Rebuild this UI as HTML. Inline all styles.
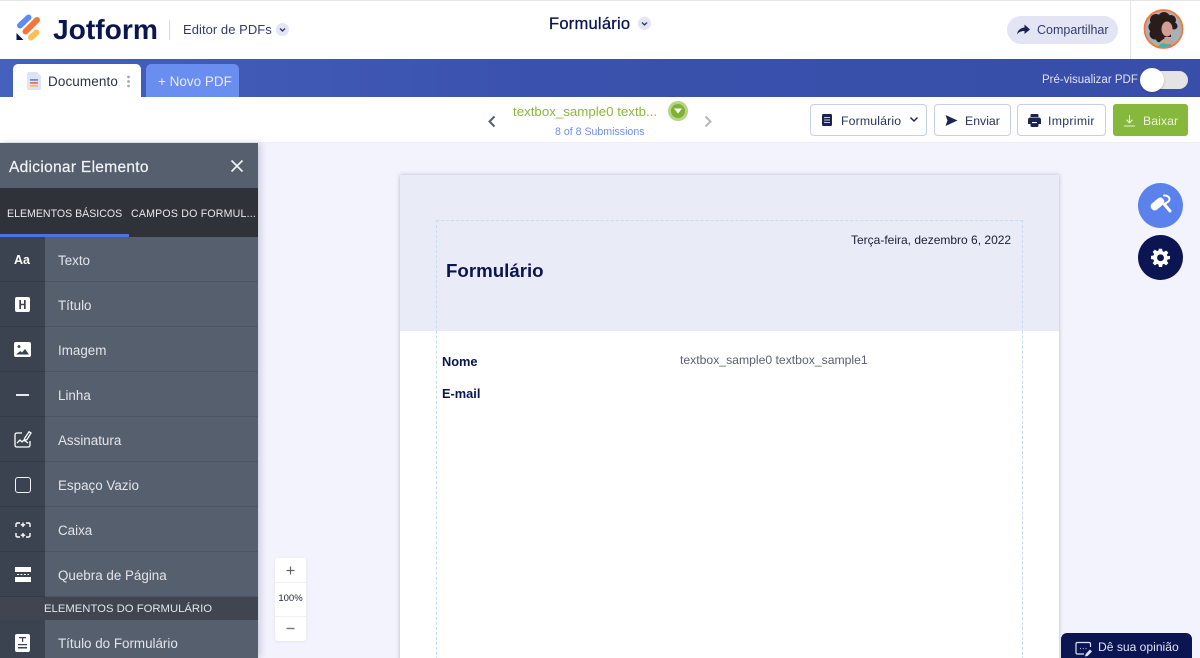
<!DOCTYPE html>
<html lang="pt"><head><meta charset="utf-8"><title>Jotform Editor de PDFs</title>
<style>
*{box-sizing:border-box}
html,body{margin:0;padding:0;width:1200px;height:658px;overflow:hidden}
#w{position:relative;width:1200px;height:658px;overflow:hidden;background:#f3f3fe;font-family:"Liberation Sans",sans-serif;color:#0a1551}
.a,.t{position:absolute}
.t{white-space:nowrap;line-height:20px;height:20px}
svg{position:absolute;display:block}
.btn{position:absolute;top:104px;height:32px;background:#fff;border:1px solid #c8ceed;border-radius:4px}
.row{position:absolute;left:0;width:258px;height:45px;background:#555f6e;border-bottom:1px solid #4c5563}
.row i{position:absolute;left:0;top:0;width:45px;height:45px;background:#3a434f;border-bottom:1px solid #333b46}
.row span{position:absolute;left:58px;top:13.500px;font-size:13.400px;line-height:20px;color:#e3e5ea;white-space:nowrap}
.chev{position:absolute;border-radius:50%;background:#e3e5f5}
</style></head><body><div id="w">

<!-- top header -->
<div class="a" style="left:0;top:0;width:1200px;height:59px;background:#fff;border-top:1px solid #e6e6e6"></div>
<svg style="left:0;top:0" width="45" height="45" viewBox="0 0 45 45">
<path d="M20 25.500 28.500 17.500" stroke="#5b8def" stroke-width="6" stroke-linecap="round"/>
<path d="M25.500 31.500 37 20" stroke="#f2763a" stroke-width="6" stroke-linecap="round"/>
<path d="M31 37.500 36.500 32.500" stroke="#fbc04d" stroke-width="6" stroke-linecap="round"/>
<path d="M16.500 33V40H23.500Z" fill="#0a1551"/>
</svg>
<div class="t" style="left:53px;top:13px;height:32px;line-height:32px;font-size:28.200px;font-weight:700;color:#0a1551">Jotform</div>
<div class="a" style="left:169px;top:20px;width:1px;height:20px;background:#d8dae5"></div>
<div class="t" style="left:183px;top:20px;font-size:13px;letter-spacing:.05px;color:#343c6a">Editor de PDFs</div>
<div class="chev" style="left:276px;top:23px;width:13px;height:13px"></div>
<svg style="left:276px;top:23px" width="13" height="13" viewBox="0 0 13 13"><path d="M4 5.500 6.500 8 9 5.500" fill="none" stroke="#2b3361" stroke-width="1.300"/></svg>
<div class="t" style="left:549px;top:13.500px;font-size:16.500px;letter-spacing:.25px;color:#0a1551;-webkit-text-stroke:.3px #0a1551">Formulário</div>
<div class="chev" style="left:638px;top:17px;width:13px;height:13px"></div>
<svg style="left:638px;top:17px" width="13" height="13" viewBox="0 0 13 13"><path d="M4 5.500 6.500 8 9 5.500" fill="none" stroke="#2b3361" stroke-width="1.300"/></svg>
<div class="a" style="left:1007px;top:16px;width:111px;height:28px;border-radius:14px;background:#e3e5f5"></div>
<svg style="left:1016px;top:23px" width="15" height="14" viewBox="0 0 15 14"><path d="M8.500 1.500 14 6.500 8.500 11V8C5 8 2.800 9 1 11.500 1.500 7.500 4 5 8.500 4.500Z" fill="#1a2352"/></svg>
<div class="t" style="left:1037px;top:20px;font-size:12.500px;color:#343c6a">Compartilhar</div>
<div class="a" style="left:1130px;top:0;width:1px;height:59px;background:#e5e6ec"></div>
<svg style="left:1143px;top:9px" width="41" height="40" viewBox="0 0 41 40">
<clipPath id="c"><circle cx="20.500" cy="20" r="18.500"/></clipPath>
<g clip-path="url(#c)">
<rect x="0" y="0" width="41" height="40" fill="#a9b1b8"/>
<g fill="#2a1c1b"><circle cx="13" cy="11" r="6"/><circle cx="21" cy="9" r="6"/><circle cx="28" cy="11" r="5"/><circle cx="11" cy="18" r="5.500"/><circle cx="12" cy="25" r="5.500"/><circle cx="17" cy="29" r="4.500"/><circle cx="31" cy="17" r="3.500"/><rect x="12" y="10" width="16" height="18"/></g>
<ellipse cx="24" cy="20" rx="5.500" ry="7.500" fill="#d49f92"/>
<path d="M14 40C15 33 19 30 24 29 29 30 33 34 34 40Z" fill="#c9a096"/>
<path d="M14 40C16 35 20 33 23 35 26 36 29 33 31 40Z" fill="#3fb3ae"/>
</g>
<circle cx="20.500" cy="20" r="19" fill="none" stroke="#f2763a" stroke-width="1.800"/>
</svg>

<!-- blue bar -->
<div class="a" style="left:0;top:59px;width:1200px;height:38px;background:linear-gradient(90deg,#4560bd 0,#3a52ad 45%,#384ea9 100%)"></div>
<div class="a" style="left:13px;top:64px;width:128px;height:34px;background:#fff;border-radius:5px 5px 0 0"></div>
<svg style="left:27px;top:72px" width="15" height="18" viewBox="0 0 15 18"><path d="M2 0H10L14 4V16.500Q14 18 12.500 18H2Q0 18 0 16V2Q0 0 2 0Z" fill="#dfe3f6"/><rect x="3" y="7" width="8" height="1.800" fill="#5b8def"/><rect x="3" y="10" width="8" height="1.800" fill="#f2763a"/><rect x="3" y="13" width="8" height="1.800" fill="#fbc04d"/></svg>
<div class="t" style="left:48px;top:72px;font-size:13.500px;letter-spacing:.1px;color:#2c3345">Documento</div>
<svg style="left:126px;top:75px" width="5" height="13" viewBox="0 0 5 13"><g fill="#a5a8b4"><circle cx="2.500" cy="2" r="1.400"/><circle cx="2.500" cy="6.500" r="1.400"/><circle cx="2.500" cy="11" r="1.400"/></g></svg>
<div class="a" style="left:146px;top:64px;width:93px;height:33px;background:#6a8df0;border-radius:5px 5px 0 0"></div>
<div class="t" style="left:158px;top:72px;font-size:13.500px;color:#e6ebfd">+ Novo PDF</div>
<div class="t" style="left:1042px;top:70px;font-size:11.500px;color:#dfe3f6">Pré-visualizar PDF</div>
<div class="a" style="left:1146px;top:71px;width:42px;height:18px;border-radius:9px;background:#e4e4e4"></div>
<div class="a" style="left:1140px;top:68px;width:24px;height:24px;border-radius:50%;background:#fff;box-shadow:0 1px 2px rgba(0,0,0,.2)"></div>

<!-- toolbar -->
<div class="a" style="left:0;top:97px;width:1200px;height:46px;background:#fff;border-bottom:1px solid #ececf4"></div>
<div class="t" style="left:513px;top:102px;font-size:13.300px;color:#8ab83e">textbox_sample0 textb...</div>
<div class="a" style="left:668px;top:101px;width:20px;height:20px;border-radius:50%;background:#b5d583"></div>
<div class="a" style="left:671px;top:104px;width:14px;height:14px;border-radius:50%;background:#7fb135"></div>
<svg style="left:674px;top:108px" width="8" height="6" viewBox="0 0 8 6"><path d="M0 .5H8L4 5.500Z" fill="#fff"/></svg>
<div class="t" style="left:555px;top:122px;font-size:10.600px;color:#6f8ff2">8 of 8 Submissions</div>
<svg style="left:487px;top:115px" width="10" height="13" viewBox="0 0 10 13"><path d="M7.500 1.500 2.500 6.500 7.500 11.500" fill="none" stroke="#595e6b" stroke-width="2"/></svg>
<svg style="left:703px;top:115px" width="10" height="13" viewBox="0 0 10 13"><path d="M2.500 1.500 7.500 6.500 2.500 11.500" fill="none" stroke="#b5b7bd" stroke-width="2"/></svg>

<div class="btn" style="left:810px;width:117px"></div>
<svg style="left:822px;top:114px" width="10" height="12" viewBox="0 0 10 12"><rect width="10" height="12" rx="1.500" fill="#1a2352"/><path d="M2 3.500H8M2 6H8M2 8.500H8" stroke="#fff" stroke-width=".8"/></svg>
<div class="t" style="left:841px;top:110.500px;font-size:12.300px;letter-spacing:.15px;color:#2a3260">Formulário</div>
<svg style="left:909px;top:116px" width="10" height="8" viewBox="0 0 10 8"><path d="M1.500 1.500 5 5 8.500 1.500" fill="none" stroke="#1a2352" stroke-width="1.400"/></svg>
<div class="btn" style="left:934px;width:77px"></div>
<svg style="left:945px;top:114px" width="13" height="13" viewBox="0 0 13 13"><path d="M.5 1 12.500 6.500 .5 12 2.500 6.500Z" fill="#1a2352"/></svg>
<div class="t" style="left:965px;top:110.500px;font-size:12.300px;color:#2a3260">Enviar</div>
<div class="btn" style="left:1017px;width:89px"></div>
<svg style="left:1028px;top:114px" width="13" height="13" viewBox="0 0 13 13"><path d="M3.500 0H9.500Q10.500 0 10.500 1V3H2.500V1Q2.500 0 3.500 0ZM2.500 3.500H10.500Q13 3.500 13 6V10H10.500V11.500Q10.500 13 9 13H4Q2.500 13 2.500 11.500V10H0V6Q0 3.500 2.500 3.500Z" fill="#1a2352"/><rect x="4" y="8" width="5" height="1.100" fill="#fff"/></svg>
<div class="t" style="left:1048px;top:110.500px;font-size:12.300px;letter-spacing:.3px;color:#2a3260">Imprimir</div>
<div class="a" style="left:1113px;top:104px;width:75px;height:32px;background:#86b83b;border-radius:3px"></div>
<svg style="left:1123px;top:114px" width="13" height="13" viewBox="0 0 13 13"><path d="M6.500 1V8.500M3.500 5.800 6.500 8.800 9.500 5.800M1 12H12" fill="none" stroke="#e9f3d8" stroke-width="1.100"/></svg>
<div class="t" style="left:1143px;top:110.500px;font-size:12.300px;letter-spacing:.05px;color:#e9f3d8">Baixar</div>

<!-- page -->
<div class="a" style="left:400px;top:175px;width:659px;height:490px;background:#fff;box-shadow:0 0 4px rgba(40,45,80,.3)"></div>
<div class="a" style="left:400px;top:175px;width:659px;height:156px;background:#e9ebf7"></div>
<div class="a" style="left:436px;top:220px;width:587px;height:445px;border:1px dashed #c8dcf0"></div>
<div class="t" style="left:851px;top:230px;font-size:12px;color:#1b1f33">Terça-feira, dezembro 6, 2022</div>
<div class="t" style="left:446px;top:261px;font-size:18.700px;font-weight:700;color:#0a1551">Formulário</div>
<div class="t" style="left:442px;top:351.500px;font-size:12.800px;font-weight:700;color:#0a1551">Nome</div>
<div class="t" style="left:442px;top:383.500px;font-size:12.800px;font-weight:700;color:#0a1551">E-mail</div>
<div class="t" style="left:680px;top:350px;font-size:12.200px;color:#5c6070">textbox_sample0 textbox_sample1</div>

<!-- side buttons -->
<div class="a" style="left:1138px;top:183px;width:45px;height:45px;border-radius:50%;background:#5b82ec"></div>
<svg style="left:1148px;top:193px" width="25" height="25" viewBox="0 0 25 25"><rect x="2" y="7" width="15" height="8" rx="3.500" transform="rotate(-40 9.500 11)" fill="#fff"/><path d="M16 2.500Q21 2.500 21.500 6 21.500 8.500 18 10L16.500 11.500" fill="none" stroke="#fff" stroke-width="2" stroke-linecap="round"/><path d="M16.500 11.500 22 18" fill="none" stroke="#fff" stroke-width="3" stroke-linecap="round"/></svg>
<div class="a" style="left:1138px;top:235px;width:45px;height:45px;border-radius:50%;background:#0a1551"></div>
<svg style="left:1151px;top:248px" width="19" height="19" viewBox="0 0 24 24"><path fill="#fff" fill-rule="evenodd" d="M10 1h4l.6 3.100 1.800.8 2.700-1.800 2.800 2.800-1.800 2.700.8 1.800L24 10v4l-3.100.6-.8 1.800 1.800 2.700-2.800 2.800-2.700-1.800-1.800.8L14 24h-4l-.6-3.100-1.800-.8-2.700 1.800-2.800-2.800 1.800-2.700-.8-1.800L0 14v-4l3.100-.6.8-1.800L2.100 4.900l2.800-2.800 2.700 1.800 1.800-.8zM12 8a4.300 4.300 0 1 0 .01 0z"/></svg>

<!-- zoom -->
<div class="a" style="left:275px;top:558px;width:31px;height:83px;background:#fff;border-radius:3px;box-shadow:0 1px 3px rgba(40,45,80,.08)"></div>
<div class="a" style="left:275px;top:582px;width:31px;height:1px;background:#f0f0f6"></div>
<div class="a" style="left:275px;top:616px;width:31px;height:1px;background:#f0f0f6"></div>
<svg style="left:285px;top:565px" width="11" height="11" viewBox="0 0 11 11"><path d="M5.500 1.500V9.500M1.500 5.500H9.500" stroke="#60646f" stroke-width="1.200"/></svg>
<svg style="left:285px;top:623px" width="11" height="11" viewBox="0 0 11 11"><path d="M1.500 5.500H9.500" stroke="#70747f" stroke-width="1.400"/></svg>
<div class="t" style="left:275px;width:31px;text-align:center;top:588.500px;font-size:9.500px;color:#23283a">100%</div>

<!-- feedback -->
<div class="a" style="left:1061px;top:633px;width:131px;height:30px;background:#0a1551;border-radius:6px 6px 0 0"></div>
<svg style="left:1075px;top:641px" width="18" height="17" viewBox="0 0 18 17"><path d="M9 13H2.500Q1 13 1 11.500V3Q1 1.500 2.500 1.500H14Q15.500 1.500 15.500 3V6" fill="none" stroke="#dfe3f6" stroke-width="1.200"/><path d="M5 7.500H5.800M7.800 7.500H8.600M10.600 7.500H11.400" stroke="#dfe3f6" stroke-width="1.300"/><path d="M10 15.500 10.700 13 15 8.500 17 10.500 12.500 15Z" fill="#dfe3f6"/></svg>
<div class="t" style="left:1098px;top:637px;font-size:12.100px;color:#dfe3f6">Dê sua opinião</div>

<!-- sidebar -->
<div class="a" style="left:0;top:143px;width:258px;height:515px;background:#555f6e;box-shadow:3px 0 6px rgba(40,45,80,.18)"></div>
<div class="t" style="left:9px;top:157.500px;font-size:15.500px;letter-spacing:.3px;color:#f2f3f5;-webkit-text-stroke:.2px #f2f3f5">Adicionar Elemento</div>
<svg style="left:230px;top:159px" width="14" height="14" viewBox="0 0 14 14"><path d="M1.500 1.500 12.500 12.500M12.500 1.500 1.500 12.500" stroke="#f2f3f5" stroke-width="1.700"/></svg>
<div class="a" style="left:0;top:188px;width:258px;height:49px;background:#303239"></div>
<div class="a" style="left:0;top:234px;width:129px;height:3px;background:#4a72e0"></div>
<div class="t" style="left:7px;top:204px;font-size:10.600px;color:#e8e9ec">ELEMENTOS BÁSICOS</div>
<div class="t" style="left:131px;top:204px;font-size:10.600px;letter-spacing:.2px;color:#e8e9ec">CAMPOS DO FORMUL...</div>

<div class="row" style="top:237px"><i></i><span>Texto</span></div>
<div class="row" style="top:282px"><i></i><span>Título</span></div>
<div class="row" style="top:327px"><i></i><span>Imagem</span></div>
<div class="row" style="top:372px"><i></i><span>Linha</span></div>
<div class="row" style="top:417px"><i></i><span>Assinatura</span></div>
<div class="row" style="top:462px"><i></i><span>Espaço Vazio</span></div>
<div class="row" style="top:507px"><i></i><span>Caixa</span></div>
<div class="row" style="top:552px"><i></i><span>Quebra de Página</span></div>
<div class="a" style="left:0;top:597px;width:258px;height:23px;background:#40454f"></div>
<div class="t" style="left:44px;top:599px;font-size:11.300px;color:#e3e5ea">ELEMENTOS DO FORMULÁRIO</div>
<div class="row" style="top:620px;height:38px;border:0"><i style="height:38px;border:0"></i><span>Título do Formulário</span></div>

<div class="t" style="left:14px;top:250px;font-size:12.500px;font-weight:700;color:#fff">Aa</div>
<svg style="left:15px;top:297px" width="15" height="15" viewBox="0 0 15 15"><path fill="#fff" fill-rule="evenodd" d="M2 0H13Q15 0 15 2V13Q15 15 13 15H2Q0 15 0 13V2Q0 0 2 0ZM4.300 3V12H6V8.300H9V12H10.700V3H9V6.700H6V3Z"/></svg>
<svg style="left:14px;top:342px" width="17" height="15" viewBox="0 0 17 15"><path fill="#fff" fill-rule="evenodd" d="M2 0H15Q17 0 17 2V13Q17 15 15 15H2Q0 15 0 13V2Q0 0 2 0ZM5 3A1.500 1.500 0 1 0 5.010 3ZM2 12.500H15L11 7 8 10.500 6.300 9Z"/></svg>
<div class="a" style="left:16px;top:394px;width:13px;height:1.500px;background:#e8e9ec"></div>
<svg style="left:14px;top:430px" width="18" height="18" viewBox="0 0 18 18" fill="none" stroke="#fff" stroke-width="1.300"><path d="M8 3H3Q1 3 1 5V15Q1 17 3 17H14Q16 17 16 15V11"/><path d="M3 13 6 10 8 12 10 10 14 13"/><path d="M10.500 8.500 15 1.800 17 3 13 9.500 10.500 10.500Z"/></svg>
<div class="a" style="left:15px;top:477px;width:16px;height:16px;border:1.500px solid #f2f3f5;border-radius:3px"></div>
<svg style="left:15px;top:522px" width="16" height="16" viewBox="0 0 16 16" fill="none" stroke="#fff" stroke-width="1.400"><path d="M1 5V2.500Q1 1 2.500 1H5M11 1H13.500Q15 1 15 2.500V5M1 11V13.500Q1 15 2.500 15H5M11 15H13.500Q15 15 15 13.500V11"/><path d="M8 .5V5M5.800 2.800H10.200M8 11V15.500M5.800 13.200H10.200M1 8H1.100M15 8H15.100"/></svg>
<svg style="left:15px;top:567px" width="16" height="15" viewBox="0 0 16 15"><path d="M0 0H16V5H0ZM0 10H16V15H0Z" fill="#fff"/><path d="M2 7.500H14" stroke="#fff" stroke-width="1" stroke-dasharray="2 1.500"/></svg>
<svg style="left:15px;top:634px" width="15" height="18" viewBox="0 0 15 18"><path fill="#fff" fill-rule="evenodd" d="M2 0H13Q15 0 15 2V16Q15 18 13 18H2Q0 18 0 16V2Q0 0 2 0ZM4 3V4.200H7V8H8.200V4.200H11V3ZM3 10V11.200H12V10ZM3 13V14.500H12V13Z"/></svg>
</div></body></html>
